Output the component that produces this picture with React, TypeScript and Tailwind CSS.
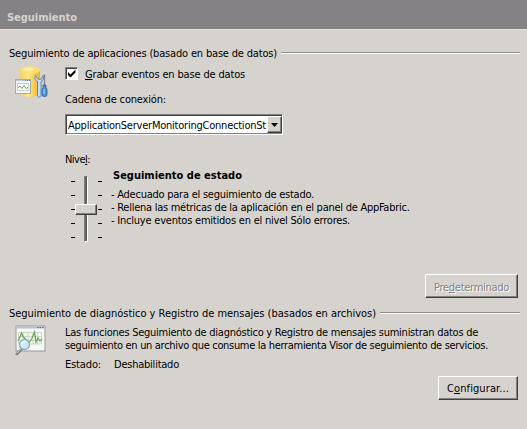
import type { ReactNode } from "react";

function SectionTitle({ children, tracking }: { children: ReactNode; tracking: string }) {
  return (
    <div className="flex h-[13px] items-start">
      <span className={tracking}>{children}</span>
      <div className="mt-[5px] ml-[4px] h-[2px] flex-1 border-b border-white bg-[#8f8d89]" />
    </div>
  );
}

function Key({ children }: { children: string }) {
  return <span className="underline decoration-1 underline-offset-[1px] [text-decoration-skip-ink:none]">{children}</span>;
}

function DatabaseIcon() {
  return (
    <svg width="34" height="34" viewBox="0 0 34 34">
      <defs>
        <linearGradient id="gold" x1="0" x2="1">
          <stop offset="0" stopColor="#f9cf5b" />
          <stop offset=".4" stopColor="#ffe88a" />
          <stop offset="1" stopColor="#f2b01e" />
        </linearGradient>
      </defs>
      <path d="M5.500 4v23c0 5 19.500 5 19.500 0V4z" fill="url(#gold)" />
      <ellipse cx="15.200" cy="4.200" rx="9.700" ry="3.900" fill="#ffdf6c" />
      <ellipse cx="13.500" cy="3.500" rx="5.500" ry="1.800" fill="#fff0a5" />
      <rect x=".5" y="13.500" width="15" height="14" fill="#f4f6f7" stroke="#a3abb4" />
      <path d="M1 14.500h14" stroke="#bccbdc" />
      <path d="M10 14.500h1m1 0h1m1 0h1" stroke="#63799b" />
      <path d="M2.500 17.500h11v7h-11z" fill="#fff" stroke="#b2bcb2" strokeWidth=".7" />
      <path d="M3 22l2-2 2 2.500 2-3 2 3 2-1" fill="none" stroke="#69a566" />
      <path d="M20.500 9.500c-1.500 3 0 5.500 2 6v14c0 2 3.500 2 3.500 0v-14c2.500-1 3-3.500 2-6l-1.500 3.500-2.300.5-2-1z" fill="#c9dced" stroke="#527daa" strokeWidth=".9" />
      <path d="M29.500 8.500v11" stroke="#7d8791" strokeWidth="1.300" />
      <path d="M28 19h3v2.500l1 1.500v6c0 2-5 2-5 0v-6l1-1.500z" fill="#4b91d2" stroke="#2d5f9b" strokeWidth=".8" />
      <path d="M29 23v5" stroke="#b9ddf8" />
    </svg>
  );
}

function DiagnosticsIcon() {
  return (
    <svg width="32" height="32" viewBox="0 0 32 32">
      <rect x="1" y="1" width="29" height="25" fill="#f6f6f5" stroke="#97999c" />
      <path d="M1.500 2.500h28" stroke="#b7c1ce" strokeWidth="2" />
      <path d="M22 2.500h1.500m1 0h1.500m1 0h1.500" stroke="#566781" />
      <path d="M3.500 7.500h23v11.500h-23zM3.500 11.500h23M3.500 15.500h23M8 7.500v11.500M13 7.500v11.500M18 7.500v11.500M22.500 7.500v11.500" fill="none" stroke="#bfc9b9" strokeWidth=".7" />
      <path d="M3 16l2-4 1.500-4 2 4 3 3 3 2 2-3 1-2 2-5 1.500 10 2-4 2 3 2-2" fill="none" stroke="#67ac57" strokeWidth="1.300" />
      <path d="M1.800 29l4.500-4.500" stroke="#7b7f87" strokeWidth="2.600" strokeLinecap="round" />
      <path d="M1.800 28.300l4-4" stroke="#d8dce0" strokeWidth=".8" />
      <circle cx="9.500" cy="19.500" r="5" fill="#c9e8f8" fillOpacity=".92" stroke="#93abc1" strokeWidth="1.300" />
      <path d="M6.500 19a3.500 3.500 0 0 1 4-2.500" fill="none" stroke="#fff" strokeWidth="1.400" />
    </svg>
  );
}

function Ticks() {
  return (
    <div className="flex w-[4px] flex-col gap-[13px] pt-[5px]">
      {[0, 1, 2, 3, 4].map((n) => (
        <div key={n} className="h-px bg-black" />
      ))}
    </div>
  );
}

function LevelSlider() {
  return (
    <div className="relative ml-[6px] flex h-[66px] w-[31px] justify-between">
      <Ticks />
      <div className="mr-px h-[66px] w-[4px] border border-t-[#808080] border-r-white border-b-white border-l-[#808080] bg-[#606060]" />
      <Ticks />
      <div className="absolute top-[28px] left-[4px] h-[11px] w-[22px] border border-t-white border-r-[#404040] border-b-[#404040] border-l-white bg-[#d6d3ce] shadow-[inset_-1px_-1px_0_#808080]" />
    </div>
  );
}

function Button({ children, className }: { children: ReactNode; className: string }) {
  return (
    <button
      className={
        "flex items-start justify-center border border-t-white border-r-[#404040] border-b-[#404040] border-l-white bg-[#d6d3ce] pt-[5px] shadow-[inset_-1px_-1px_0_#808080] " +
        className
      }
    >
      {children}
    </button>
  );
}

export default function App() {
  return (
    <div className="h-[429px] w-[527px] overflow-hidden bg-[#d6d3ce] font-['DejaVu_Sans_Condensed','DejaVu_Sans',sans-serif] text-[11px] leading-[13px] whitespace-nowrap text-black">
      <header className="h-[29px] bg-[#848284] pt-[11px] pl-[7px] font-bold tracking-[-0.033px] text-[#d6d3ce]">
        Seguimiento
      </header>

      <section className="h-[259px] border-t border-[#e4e2de] pt-[17px] pr-[7px] pl-[9px]">
        <SectionTitle tracking="tracking-[-0.175px]">Seguimiento de aplicaciones (basado en base de datos)</SectionTitle>
        <div className="mt-px flex">
          <div className="w-[56px] pt-[5px] pl-[6px]">
            <DatabaseIcon />
          </div>
          <div>
            <label className="flex h-[14px] mt-[6px]">
              <span className="flex h-[13px] w-[13px] items-center justify-center border border-t-[#808080] border-r-white border-b-white border-l-[#808080] bg-white shadow-[inset_1px_1px_0_#404040]">
                <svg width="9" height="9" viewBox="0 0 9 9">
                  <path d="M1 3v3l2.500 2.500L8.500 3.500V.500L3.500 5.500z" fill="#000" />
                </svg>
              </span>
              <span className="ml-[7px] pt-px tracking-[-0.164px]">
                <Key>G</Key>rabar eventos en base de datos
              </span>
            </label>
            <div className="mt-[12px] tracking-[-0.173px]">Cadena de conexión:</div>
            <div className="mt-[8px] flex h-[21px] w-[218px] border border-t-[#808080] border-r-white border-b-white border-l-[#808080] bg-white shadow-[inset_1px_1px_0_#404040,inset_-1px_-1px_0_#808080]">
              <div className="ml-[2px] w-[199px] overflow-hidden pt-[4px] tracking-[-0.227px]">ApplicationServerMonitoringConnectionSt</div>
              <div className="mt-px flex h-[17px] w-[15px] shrink-0 items-center justify-center border border-t-white border-r-[#404040] border-b-[#404040] border-l-white bg-[#d6d3ce] shadow-[inset_-1px_-1px_0_#808080]">
                <svg width="7" height="4" viewBox="0 0 7 4">
                  <path d="M0 0h7L3.500 4z" />
                </svg>
              </div>
            </div>
            <div className="mt-[18px] tracking-[-0.531px]">
              Nive<Key>l</Key>:
            </div>
            <div className="flex">
              <div className="pt-[10px]">
                <LevelSlider />
              </div>
              <div className="ml-[9px] pt-[3px]">
                <div className="ml-[2px] font-bold">Seguimiento de estado</div>
                <div className="mt-[6px] tracking-[-0.242px]">- Adecuado para el seguimiento de estado.</div>
                <div className="tracking-[-0.26px]">- Rellena las métricas de la aplicación en el panel de AppFabric.</div>
                <div className="tracking-[-0.220px]">- Incluye eventos emitidos en el nivel Sólo errores.</div>
              </div>
            </div>
          </div>
        </div>
        <div className="mt-[32px] mr-[2px] flex justify-end">
          <Button className="h-[24px] w-[93px] tracking-[-0.285px] text-[#848284] [text-shadow:1px_1px_0_white]">
            <span className="pt-px">
              Pre<Key>d</Key>eterminado
            </span>
          </Button>
        </div>
      </section>

      <section className="pt-[19px] pr-[7px] pl-[9px]">
        <SectionTitle tracking="tracking-[-0.020px]">Seguimiento de diagnóstico y Registro de mensajes (basados en archivos)</SectionTitle>
        <div className="flex">
          <div className="w-[56px] pt-[5px] pl-[6px]">
            <DiagnosticsIcon />
          </div>
          <div className="pt-[6px]">
            <p className="tracking-[-0.259px]">Las funciones Seguimiento de diagnóstico y Registro de mensajes suministran datos de</p>
            <p className="tracking-[-0.317px]">seguimiento en un archivo que consume la herramienta Visor de seguimiento de servicios.</p>
            <div className="mt-[6px] flex">
              <span className="w-[49px] tracking-[-0.147px]">Estado:</span>
              <span className="tracking-[-0.233px]">Deshabilitado</span>
            </div>
          </div>
        </div>
        <div className="mt-[5px] mr-[2px] flex justify-end">
          <Button className="h-[24px] w-[80px] tracking-[0.103px]">
            <span>
              C<Key>o</Key>nfigurar...
            </span>
          </Button>
        </div>
      </section>
    </div>
  );
}
